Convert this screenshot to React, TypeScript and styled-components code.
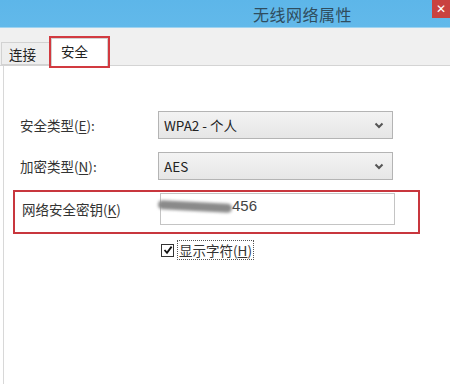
import styled, { createGlobalStyle } from "styled-components";

// styles

const GlobalStyle = createGlobalStyle`
  html, body {
    margin: 0;
    padding: 0;
    background: #ffffff;
  }
  body {
    font-family: "Noto Sans CJK SC", "Liberation Sans", sans-serif;
    color: #333;
  }
`;

const DivWindow = styled.div`
  width: 450px;
  height: 384px;
  display: flex;
  flex-direction: column;
  overflow: hidden;
  background: #fff;
`;

const DivTitleBar = styled.div`
  height: 27px;
  flex: none;
  display: flex;
  align-items: center;
  justify-content: flex-end;
  background: linear-gradient(#5db6e9, #62b9ea);
  border-bottom: 1px solid #9fd3f0;
`;

const SpanTitle = styled.span`
  font-size: 16px;
  color: #2f4d5e;
  letter-spacing: 0.5px;
  margin-right: 80px;
`;

const DivClose = styled.div`
  width: 14px;
  height: 18px;
  align-self: flex-start;
  background: #c9423f;
  color: #fff;
  font-size: 12px;
  font-family: "DejaVu Sans", sans-serif;
  display: flex;
  align-items: center;
  justify-content: flex-start;
  padding-left: 4px;
`;

const DivTabStrip = styled.div`
  height: 37px;
  flex: none;
  display: flex;
  align-items: flex-end;
  background: #f0f0f0;
  border-bottom: 1px solid #d4d4d4;
  padding-left: 1px;
`;

const DivTab = styled.div<{ $active?: boolean }>`
  display: flex;
  align-items: center;
  font-size: 13.5px;
  color: #222;
  box-sizing: border-box;
  height: ${(p) => (p.$active ? "28px" : "23px")};
  padding: ${(p) => (p.$active ? "0 0 4px 9px" : "0 0 0 7px")};
  width: ${(p) => (p.$active ? "57px" : "50px")};
  margin-bottom: ${(p) => (p.$active ? "-1px" : "0")};
  background: ${(p) => (p.$active ? "#ffffff" : "#eeeeee")};
  border: 1px solid #d2d2d2;
  border-bottom: ${(p) => (p.$active ? "none" : "1px solid #d2d2d2")};
  outline: ${(p) => (p.$active ? "2px solid #d23a40" : "none")};
  outline-offset: 0px;
`;

const DivPanel = styled.div`
  flex: 1;
  display: flex;
  flex-direction: column;
  margin-left: 3px;
  border-left: 1px solid #d8d8d8;
  padding: 45px 0 0 0;
`;

const DivRow = styled.div<{ $gap?: number }>`
  display: flex;
  align-items: center;
  height: 28px;
  padding-left: 16px;
  margin-bottom: ${(p) => p.$gap ?? 0}px;
`;

const SpanLabel = styled.span`
  width: 138px;
  flex: none;
  font-size: 13.5px;
  color: #333;
  u {
    text-decoration: underline;
    text-underline-offset: 2px;
  }
`;

const DivSelect = styled.div`
  width: 235px;
  height: 28px;
  box-sizing: border-box;
  display: flex;
  align-items: center;
  justify-content: space-between;
  padding: 0 8px 0 5px;
  border: 1px solid #b4b4b4;
  background: linear-gradient(#f3f3f3, #e6e6e6);
  font-size: 13.5px;
  color: #222;
`;

const DivKeyBox = styled.div`
  margin: 0 0 0 9px;
  width: 407px;
  height: 44px;
  box-sizing: border-box;
  border: 2px solid #c8363d;
  display: flex;
  align-items: flex-start;
  padding: 1px 0 0 7px;
`;

const SpanKeyLabel = styled(SpanLabel)`
  width: 138px;
  padding-top: 6px;
`;

const DivInput = styled.div`
  width: 235px;
  height: 32px;
  box-sizing: border-box;
  border: 1px solid #c4c4c4;
  background: #fff;
  display: flex;
  align-items: flex-start;
  padding-top: 3px;
  font-size: 15px;
  color: #444;
  font-family: "Liberation Sans", sans-serif;
`;

const SpanSmudge = styled.span`
  display: inline-block;
  width: 74px;
  height: 9px;
  margin: 5px 0 0 -3px;
  border-radius: 5px;
  background: #8a8a8a;
  filter: blur(1.6px);
  transform: rotate(3deg);
`;

const DivCheckRow = styled.div`
  display: flex;
  align-items: center;
  padding-left: 157px;
  margin-top: 6px;
  gap: 3px;
`;

const DivCheckbox = styled.div`
  width: 13px;
  height: 13px;
  box-sizing: border-box;
  border: 1px solid #333;
  display: flex;
  align-items: center;
  justify-content: center;
  background: #fff;
`;

const SpanCheckLabel = styled.span`
  font-size: 13.5px;
  color: #333;
  border: 1px dotted #555;
  padding: 0 1px;
  line-height: 18px;
`;

const Chevron = () => (
  <svg width="10" height="7" viewBox="0 0 10 7">
    <path d="M1.5 1.5 L5 5 L8.5 1.5" fill="none" stroke="#555" strokeWidth="2" />
  </svg>
);

const Check = () => (
  <svg width="10" height="10" viewBox="0 0 10 10">
    <path d="M1.5 5 L4 7.8 L8.6 1.6" fill="none" stroke="#111" strokeWidth="1.8" />
  </svg>
);

const App = () => {
  return (
    <DivWindow>
      <GlobalStyle />
      <DivTitleBar>
        <SpanTitle>无线网络属性</SpanTitle>
        <DivClose>✕</DivClose>
      </DivTitleBar>
      <DivTabStrip>
        <DivTab>连接</DivTab>
        <DivTab $active>安全</DivTab>
      </DivTabStrip>
      <DivPanel>
        <DivRow $gap={13}>
          <SpanLabel>
            安全类型(<u>E</u>):
          </SpanLabel>
          <DivSelect>
            <span>WPA2 - 个人</span>
            <Chevron />
          </DivSelect>
        </DivRow>
        <DivRow $gap={10}>
          <SpanLabel>
            加密类型(<u>N</u>):
          </SpanLabel>
          <DivSelect>
            <span>AES</span>
            <Chevron />
          </DivSelect>
        </DivRow>
        <DivKeyBox>
          <SpanKeyLabel>
            网络安全密钥(<u>K</u>)
          </SpanKeyLabel>
          <DivInput>
            <SpanSmudge />
            <span>456</span>
          </DivInput>
        </DivKeyBox>
        <DivCheckRow>
          <DivCheckbox>
            <Check />
          </DivCheckbox>
          <SpanCheckLabel>
            显示字符(<u>H</u>)
          </SpanCheckLabel>
        </DivCheckRow>
      </DivPanel>
    </DivWindow>
  );
};

export default App;
